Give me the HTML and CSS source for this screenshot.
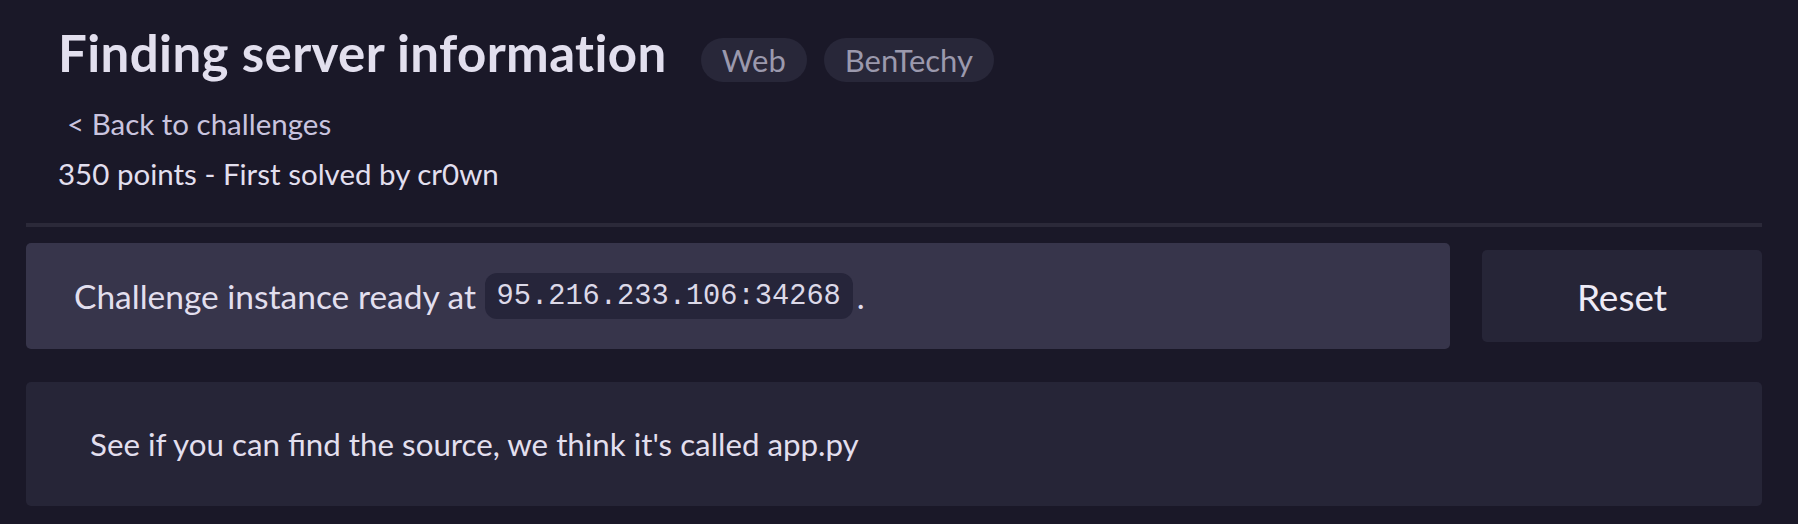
FILE: index.html
```html
<!DOCTYPE html>
<html lang="en">
<head>
<meta charset="utf-8">
<title>Finding server information</title>
<link rel="stylesheet" href="styles.css">
</head>
<body>
<main class="page">
  <header class="head">
    <div class="title-row">
      <h1 class="title">Finding server information</h1>
      <span class="tag">Web</span>
      <span class="tag">BenTechy</span>
    </div>
    <a class="back" href="#">&lt; Back to challenges</a>
    <p class="meta">350 points - First solved by cr0wn</p>
  </header>
  <hr class="divider">
  <section class="instance-row">
    <div class="instance">Challenge instance ready at <code class="addr">95.216.233.106:34268</code>.</div>
    <button class="reset" type="button">Reset</button>
  </section>
  <section class="desc">
    <p>See if you can find the source, we think it's called app.py</p>
  </section>
</main>
</body>
</html>
```
FILE: styles.css
```css
html, body {
  margin: 0;
  padding: 0;
  background: #1a1828;
}
body {
  font-family: Lato, "Liberation Sans", sans-serif;
  color: #e2dfee;
}
.page {
  padding: 0 36px 0 26px;
}
.head {
  padding: 24px 0 0 32px;
}
.title-row {
  display: flex;
  align-items: flex-start;
  gap: 17px;
  height: 58px;
}
.title {
  margin: 0 17px 0 0;
  font-size: 51px;
  font-weight: 700;
  line-height: 58px;
  color: #e2dfee;
  letter-spacing: 0.4px;
}
.tag {
  display: inline-flex;
  align-items: center;
  height: 44px;
  margin-top: 14px;
  padding: 0 21px;
  border-radius: 22px;
  background: #282739;
  color: #9b99ad;
  font-size: 31px;
}
.back {
  display: block;
  margin: 25px 0 0 9px;
  font-size: 29.5px;
  line-height: 34px;
  color: #c9c4df;
  text-decoration: none;
}
.meta {
  margin: 16px 0 0 0;
  font-size: 29.5px;
  line-height: 34px;
  color: #e2dfee;
}
.divider {
  margin: 32px 0 16px 0;
  height: 4px;
  border: 0;
  background: #2b2939;
}
.instance-row {
  display: flex;
  align-items: center;
  gap: 32px;
}
.instance {
  flex: 1;
  display: flex;
  align-items: center;
  height: 106px;
  padding-left: 48px;
  border-radius: 5px;
  background: #37354b;
  font-size: 33.5px;
  white-space: pre;
}
.addr {
  display: inline-flex;
  align-items: center;
  height: 46px;
  padding: 0 12px;
  margin-right: 4px;
  border-radius: 12px;
  background: #26253a;
  font-family: "Liberation Mono", "DejaVu Sans Mono", monospace;
  font-size: 28.7px;
  color: #dcd9e8;
}
.reset {
  width: 280px;
  height: 92px;
  border: 0;
  border-radius: 5px;
  background: #262537;
  color: #eeebf6;
  font-family: Lato, "Liberation Sans", sans-serif;
  font-size: 37px;
}
.desc {
  margin-top: 33px;
  height: 124px;
  display: flex;
  align-items: center;
  padding-left: 64px;
  border-radius: 5px;
  background: #262537;
}
.desc p {
  margin: 0;
  font-size: 31.3px;
  color: #e2dfee;
}
```
